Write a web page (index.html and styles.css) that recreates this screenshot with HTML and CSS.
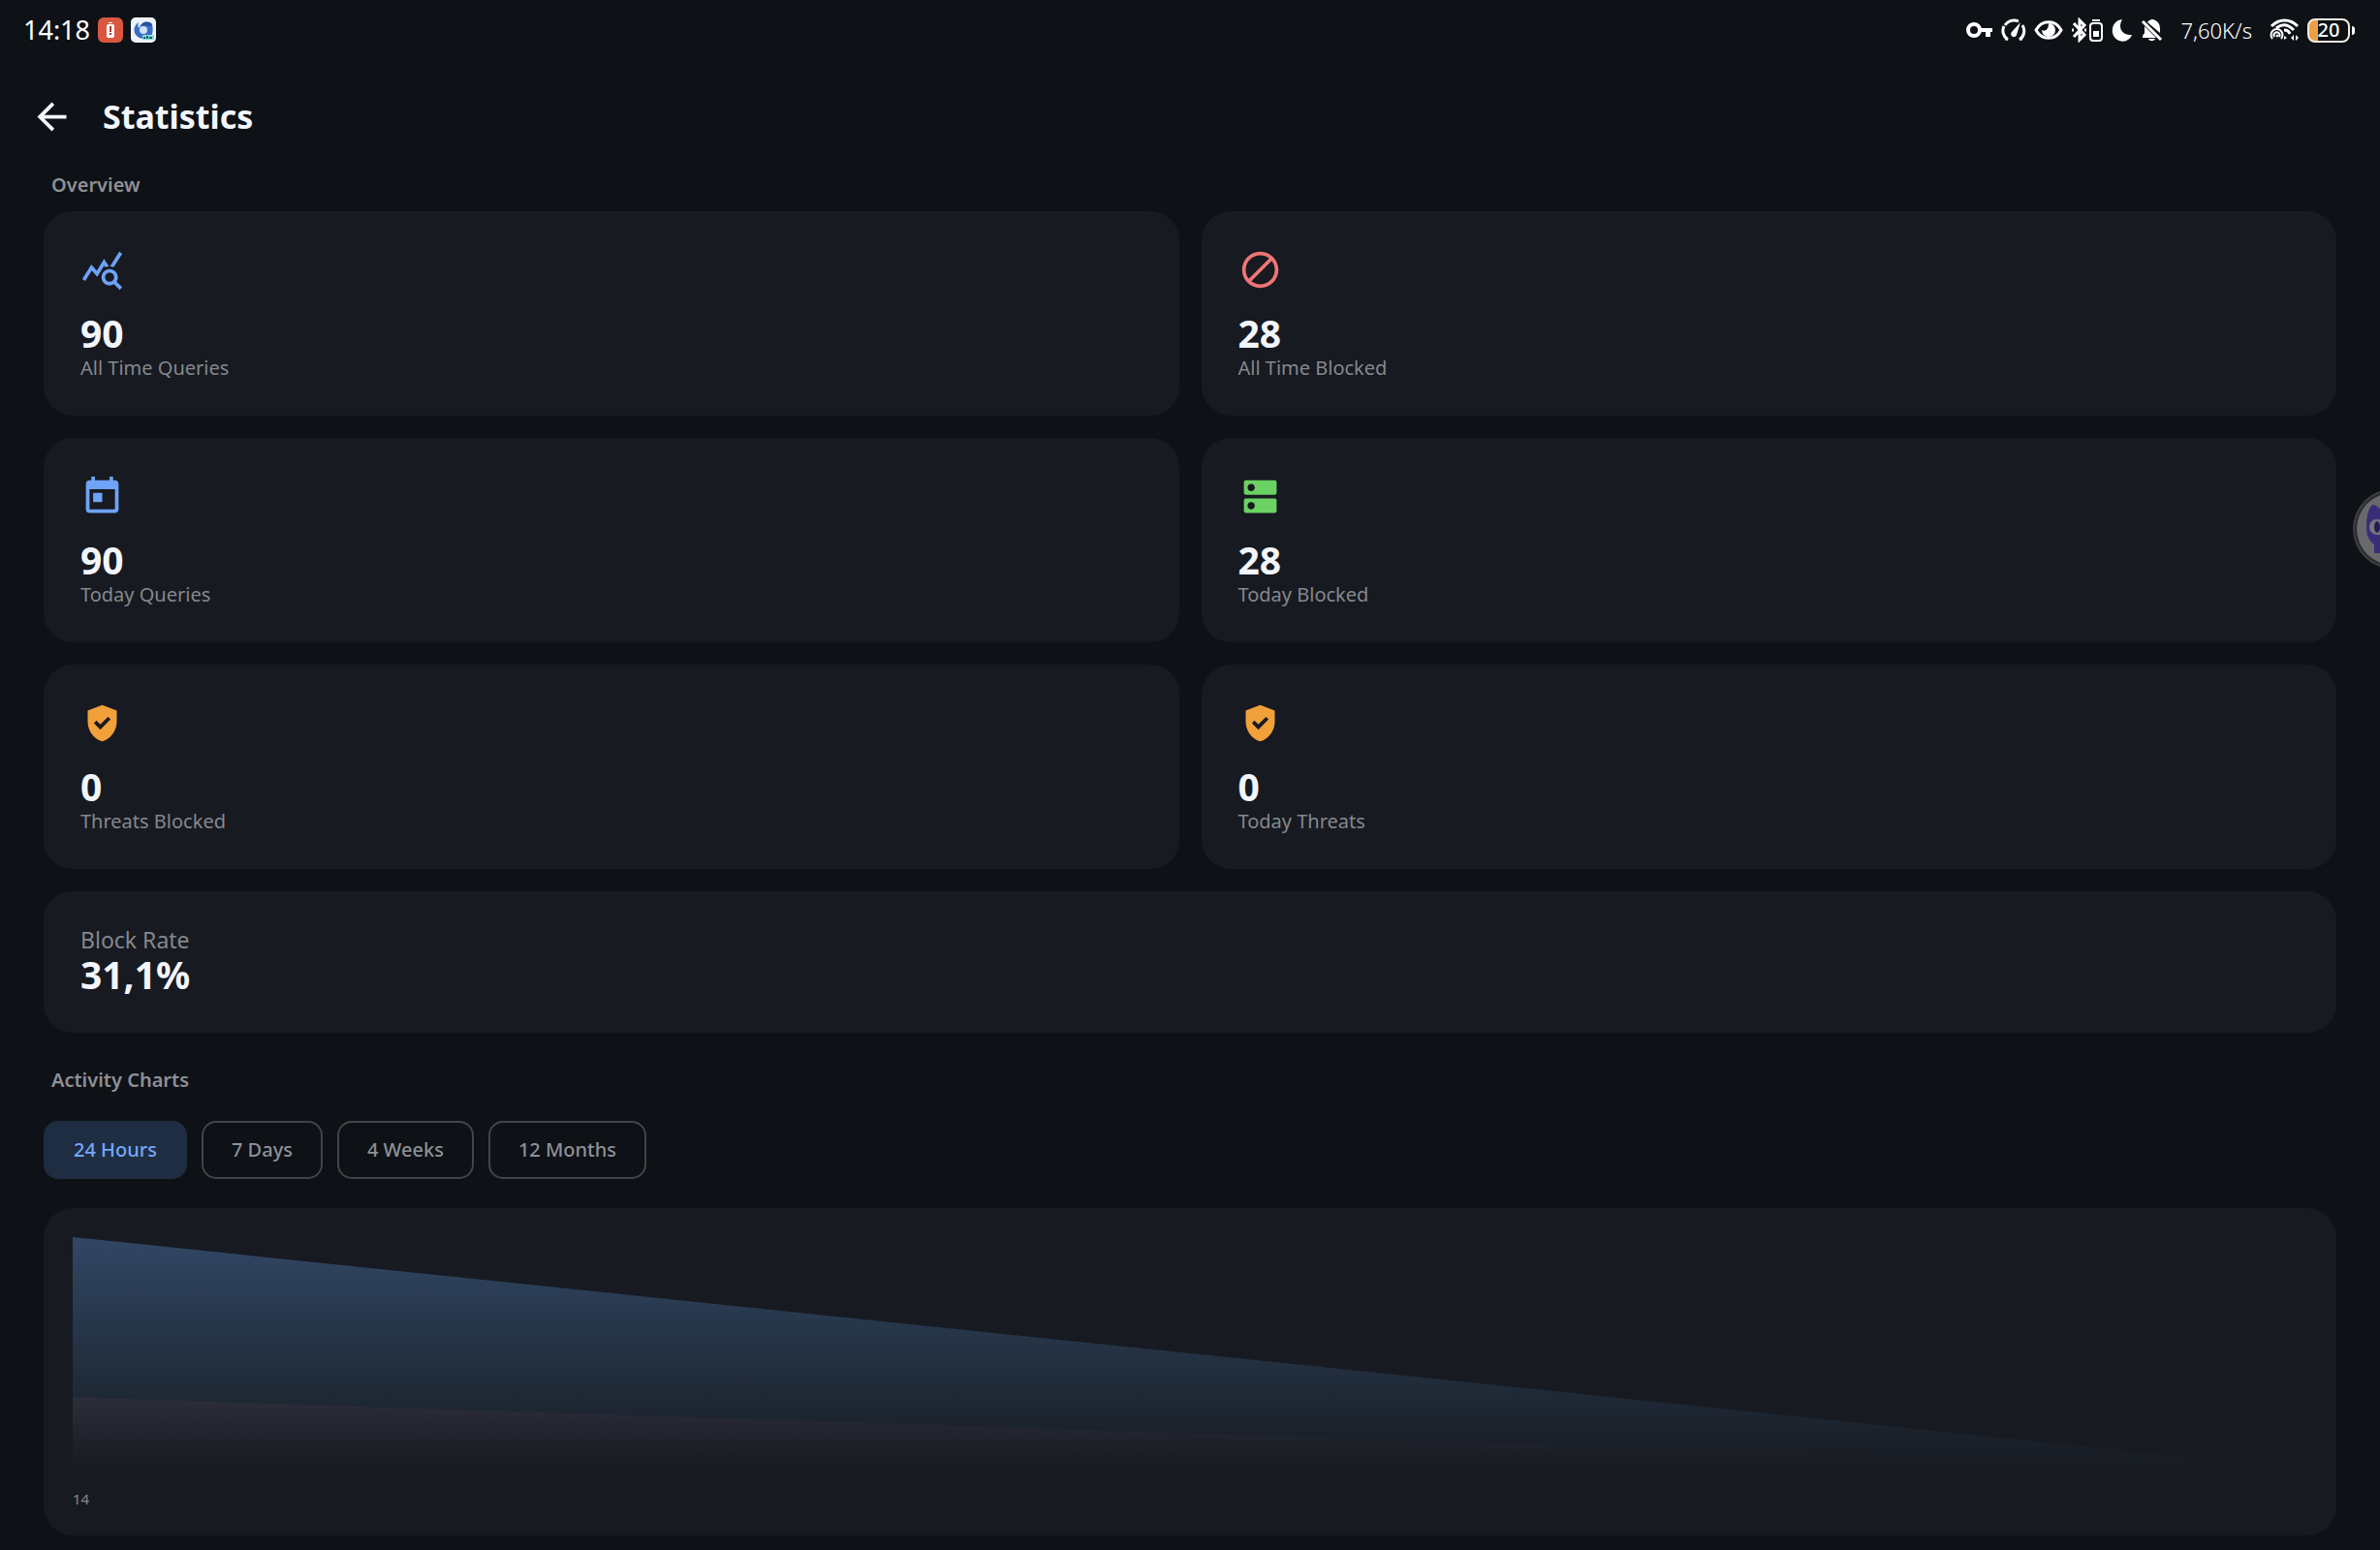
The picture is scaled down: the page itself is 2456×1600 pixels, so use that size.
FILE: index.html
```html
<!DOCTYPE html>
<html lang="en">
<head>
    <meta charset="UTF-8">
    <title>Statistics</title>
    <link rel="stylesheet" href="styles.css">
</head>
<body>
    <!-- Status bar -->
    <div class="status-bar">
        <div class="status-left">
            <span class="clock">14:18</span>
            <svg class="app-icon" viewBox="0 0 26 26">
                <rect width="26" height="26" rx="6" fill="#d9573f"/>
                <rect x="11" y="5" width="4" height="1" fill="#fff"/>
                <rect x="9" y="7" width="8" height="14" rx="2" fill="#fff"/>
                <path d="M12 9h2v6h-2zM12 16h2v2h-2z" fill="#a83a2c"/>
            </svg>
            <svg class="app-icon" viewBox="0 0 26 26">
                <rect width="26" height="26" rx="5" fill="#eef3fa"/>
                <path d="M8 5C3 8 2 15 6 19c4 4 11 4 15 0 2-3 2-8 1-12-2-3-7-3-10-1C10 7 9 9 9 11 7 10 7 7 8 5z" fill="#3a6cc4"/>
                <path d="M12 6c3-2 8-2 10 2l-3 1c-2-1-5-1-7 0z" fill="#274f9e"/>
                <circle cx="13" cy="13" r="4" fill="#cfe0f8"/>
                <rect x="12" y="18" width="12" height="5" rx="1" fill="#7fe0dc"/>
                <path d="M13 20h2v2h-2zM16 19h2v3h-2zM19 20h3v2h-3z" fill="#24566e"/>
            </svg>
        </div>
        <div class="status-right">
            <svg width="28" height="26" viewBox="0 0 28 26">
                <circle cx="8" cy="13" r="6" fill="none" stroke="#fff" stroke-width="4"/>
                <path d="M13 11h14v4h-2v5h-5v-5h-7z" fill="#fff"/>
            </svg>
            <svg width="26" height="26" viewBox="0 0 26 26" fill="none" stroke="#fff" stroke-width="3">
                <path d="M7 23A11 11 0 0 1 3 9M4 8A11 11 0 0 1 18 4M22 8a11 11 0 0 1-3 15M4 22h3M19 22h3"/>
                <path d="M20 5l-4 13a3 3 0 1 1-5-3z" fill="#fff" stroke="none"/>
            </svg>
            <svg width="30" height="26" viewBox="0 0 30 26">
                <path d="M2 13C8 2 22 2 28 13 22 24 8 24 2 13z" fill="none" stroke="#fff" stroke-width="3"/>
                <path d="M15 6a7 7 0 1 1-7 7c3 2 7 0 7-7z" fill="#fff"/>
            </svg>
            <svg width="33" height="26" viewBox="0 0 33 26" fill="none" stroke="#fff" stroke-width="2">
                <path d="M3 6l11 12-5 5V3l5 5L3 20" stroke-width="3"/>
                <path d="M1 13h2M14 13h2" stroke-width="3"/>
                <path d="M22 3h8"/>
                <rect x="20" y="6" width="12" height="18" rx="3"/>
                <rect x="23" y="14" width="6" height="6" fill="#fff" stroke="none"/>
            </svg>
            <svg width="23" height="26" viewBox="0 0 23 26">
                <path d="M12 2C0 3-2 20 9 24c6 2 11-1 13-6C12 19 7 11 12 2z" fill="#fff"/>
            </svg>
            <svg width="23" height="26" viewBox="0 0 23 26">
                <path d="M7 5c2-3 6-4 8-2 4 2 5 5 5 9v4zM4 9l12 12H2v-2l2-3zM8 22h7c-1 3-6 3-7 0z" fill="#fff"/>
                <path d="M2 4l19 19" stroke="#fff" stroke-width="3"/>
            </svg>
            <span class="speed">7,60K/s</span>
            <svg width="31" height="26" viewBox="0 0 31 26" fill="none" stroke="#fff">
                <path d="M2 9C10 1 21 1 29 9M7 11c6-5 12-4 18 2M15 13c3 0 5 1 6 4" stroke-width="3"/>
                <path d="M3 22a6 6 0 1 1 9 0M5 20a3 3 0 1 1 5 0" stroke-width="2"/>
                <circle cx="8" cy="19" r="1" fill="#fff"/>
                <path d="M15 19v4l3-2zM22 21l3-3v6zM30 21l-3-3v6z" fill="#fff" stroke="none"/>
            </svg>
            <span class="battery">20</span>
        </div>
    </div>

    <!-- Title bar -->
    <header class="header">
        <button class="back" aria-label="Back">
            <svg class="icon" viewBox="0 0 24 24"><path d="M20 11H7.83l5.59-5.59L12 4l-8 8 8 8 1.41-1.41L7.83 13H20v-2z"/></svg>
        </button>
        <h1>Statistics</h1>
    </header>

    <main>
        <h2>Overview</h2>
        <div class="cards">
            <div class="card">
                <svg class="icon blue" viewBox="0 0 24 24"><path d="M19.88 18.47c.44-.7.7-1.51.7-2.39 0-2.49-2.01-4.5-4.5-4.5s-4.5 2.01-4.5 4.5 2.01 4.5 4.49 4.5c.88 0 1.7-.26 2.39-.7L21.58 23 23 21.58l-3.12-3.11zm-3.8.11c-1.38 0-2.5-1.12-2.5-2.5s1.12-2.5 2.5-2.5 2.5 1.12 2.5 2.5-1.12 2.5-2.5 2.5zm-.36-8.5c-.74.02-1.45.18-2.1.45l-.55-.83-3.8 6.18-3.01-3.52-3.63 5.81L1 17l5-8 3 3.5L13 6l2.72 4.08zm2.59.5c-.64-.28-1.33-.45-2.05-.49L21.38 2 23 3.18l-4.69 7.4z"/></svg>
                <div class="value">90</div>
                <div class="label">All Time Queries</div>
            </div>
            <div class="card">
                <svg class="icon red" viewBox="0 0 24 24"><path d="M12 2C6.48 2 2 6.48 2 12s4.48 10 10 10 10-4.48 10-10S17.52 2 12 2zM4 12c0-4.42 3.58-8 8-8 1.85 0 3.55.63 4.9 1.69L5.69 16.9C4.63 15.55 4 13.85 4 12zm8 8c-1.85 0-3.55-.63-4.9-1.69L18.31 7.1C19.37 8.45 20 10.15 20 12c0 4.42-3.58 8-8 8z"/></svg>
                <div class="value">28</div>
                <div class="label">All Time Blocked</div>
            </div>
            <div class="card">
                <svg class="icon blue" viewBox="0 0 24 24"><path d="M19 3h-1V1h-2v2H8V1H6v2H5c-1.11 0-1.99.9-1.99 2L3 19c0 1.1.89 2 2 2h14c1.1 0 2-.9 2-2V5c0-1.1-.9-2-2-2zm0 16H5V8h14v11zM7 10h5v5H7z"/></svg>
                <div class="value">90</div>
                <div class="label">Today Queries</div>
            </div>
            <div class="card">
                <svg class="icon green" viewBox="0 0 24 24"><path d="M20 13H4c-.55 0-1 .45-1 1v6c0 .55.45 1 1 1h16c.55 0 1-.45 1-1v-6c0-.55-.45-1-1-1zM7 19c-1.1 0-2-.9-2-2s.9-2 2-2 2 .9 2 2-.9 2-2 2zM20 3H4c-.55 0-1 .45-1 1v6c0 .55.45 1 1 1h16c.55 0 1-.45 1-1V4c0-.55-.45-1-1-1zM7 9c-1.1 0-2-.9-2-2s.9-2 2-2 2 .9 2 2-.9 2-2 2z"/></svg>
                <div class="value">28</div>
                <div class="label">Today Blocked</div>
            </div>
            <div class="card">
                <svg class="icon orange" viewBox="0 0 24 24"><path d="M12 2 4 5v6.09c0 5.05 3.41 9.76 8 10.91 4.59-1.15 8-5.86 8-10.91V5l-8-3zm-1.06 13.54L7.4 12l1.41-1.41 2.12 2.12 4.24-4.24 1.41 1.41-5.64 5.66z"/></svg>
                <div class="value">0</div>
                <div class="label">Threats Blocked</div>
            </div>
            <div class="card">
                <svg class="icon orange" viewBox="0 0 24 24"><path d="M12 2 4 5v6.09c0 5.05 3.41 9.76 8 10.91 4.59-1.15 8-5.86 8-10.91V5l-8-3zm-1.06 13.54L7.4 12l1.41-1.41 2.12 2.12 4.24-4.24 1.41 1.41-5.64 5.66z"/></svg>
                <div class="value">0</div>
                <div class="label">Today Threats</div>
            </div>
            <div class="card rate">
                <div class="rate-label">Block Rate</div>
                <div class="value">31,1%</div>
            </div>
        </div>

        <h2 class="charts-title">Activity Charts</h2>
        <div class="ranges">
            <button class="range active">24 Hours</button>
            <button class="range">7 Days</button>
            <button class="range">4 Weeks</button>
            <button class="range">12 Months</button>
        </div>

        <!-- Queries in blue, blocked in red -->
        <div class="chart">
            <svg class="plot" viewBox="0 0 100 90" preserveAspectRatio="none">
                <defs>
                    <linearGradient id="queries" gradientUnits="userSpaceOnUse" x1="0" y1="0" x2="0" y2="90">
                        <stop offset="0" stop-color="#6aa6f7" stop-opacity="0.32"/>
                        <stop offset="1" stop-color="#5fb0e8" stop-opacity="0"/>
                    </linearGradient>
                    <linearGradient id="blocked" gradientUnits="userSpaceOnUse" x1="0" y1="0" x2="0" y2="90">
                        <stop offset="0" stop-color="#f07474" stop-opacity="0.2"/>
                        <stop offset="1" stop-color="#f07474" stop-opacity="0"/>
                    </linearGradient>
                </defs>
                <path d="M0 0L100 90H0z" fill="url(#queries)"/>
                <path d="M0 62L100 90H0z" fill="url(#blocked)"/>
            </svg>
            <div class="axis">14</div>
        </div>
    </main>

    <!-- Floating bubble, half off the screen -->
    <div class="bubble">
        <svg width="82" height="82" viewBox="0 0 82 82">
            <circle cx="41" cy="41" r="40" fill="#2b2c30" stroke="#3d3f43" stroke-width="2"/>
            <circle cx="41" cy="41" r="37" fill="#69696d"/>
            <path d="M14 38C14 28 16 20 20 16c4 0 8 4 10 7h22c2-3 6-7 10-7 4 4 6 12 6 22 0 12-8 18-16 20v8H22v-9c-6-4-8-10-8-19z" fill="#3a2d78"/>
            <ellipse cx="25" cy="39" rx="8" ry="8" fill="#77777c"/>
            <ellipse cx="25" cy="39" rx="3" ry="6" fill="#251b52"/>
        </svg>
    </div>
</body>
</html>
```
FILE: styles.css
```css
* {
    box-sizing: border-box;
    margin: 0;
    padding: 0;
}

body {
    background: #0e1116;
    color: #f2f5fc;
    font-family: "Noto Sans", sans-serif;
    font-size: 20px;
    line-height: 26px;
}

svg {
    display: block;
}

button {
    font: inherit;
    color: inherit;
    background: none;
    border: none;
}

/* Status bar */
.status-bar {
    display: flex;
    justify-content: space-between;
    align-items: center;
    height: 62px;
    padding: 0 25px 0 24px;
    color: #fff;
}

.status-left,
.status-right {
    display: flex;
    align-items: center;
    gap: 8px;
}

.clock {
    font-size: 27px;
}

.app-icon {
    width: 26px;
    height: 26px;
}

.speed {
    margin: 0 10px;
    font-size: 22px;
    font-weight: 300;
}

.battery {
    position: relative;
    width: 44px;
    height: 25px;
    border: 2px solid #f4ece2;
    border-radius: 8px;
    background: linear-gradient(to right, #eba045 9px, transparent 9px);
    font-size: 20px;
    font-weight: 500;
    line-height: 20px;
    text-align: center;
    margin-right: 6px;
}

.battery::after {
    content: "";
    position: absolute;
    top: 6px;
    right: -7px;
    width: 3px;
    height: 9px;
    border-radius: 0 3px 3px 0;
    background: #fff;
}

/* Title bar */
.header {
    display: flex;
    align-items: center;
    gap: 30px;
    height: 116px;
    padding: 0 31px;
}

.icon {
    width: 45px;
    height: 45px;
    fill: currentColor;
}

h1 {
    font-size: 34px;
    line-height: 44px;
}

main {
    padding: 0 45px 15px;
}

h2 {
    padding: 0 8px;
    margin-bottom: 14px;
    color: #8d9096;
    font-size: 20px;
    font-weight: 600;
}

/* Cards */
.cards {
    display: grid;
    grid-template-columns: 1fr 1fr;
    gap: 23px;
}

.card {
    padding: 38px 38px 36px;
    border-radius: 30px;
    background: #171a21;
}

.value {
    margin-top: 20px;
    font-size: 39px;
    font-weight: 700;
    line-height: 46px;
}

.label,
.rate-label {
    color: #85888e;
}

.rate {
    grid-column: 1 / -1;
    padding: 37px 38px;
}

.rate-label {
    font-size: 23px;
}

.rate .value {
    margin-top: 0;
}

.blue {
    color: #6ea3f7;
}

.red {
    color: #ef7575;
}

.green {
    color: #6bd163;
}

.orange {
    color: #f2a03a;
}

/* Range buttons */
.charts-title {
    margin: 36px 0 29px;
}

.ranges {
    display: flex;
    gap: 15px;
    margin-bottom: 30px;
}

.range {
    height: 60px;
    padding: 0 29px;
    border: 2px solid #424449;
    border-radius: 15px;
    color: #8d9096;
    font-weight: 500;
}

.range.active {
    border-color: #1f2d43;
    background: #1f2d43;
    color: #74a8fa;
}

/* Chart */
.chart {
    padding: 30px 30px 28px;
    border-radius: 30px;
    background: #171a21;
}

.plot {
    width: 100%;
    height: 240px;
}

.axis {
    margin-top: 20px;
    color: #85888e;
    font-size: 15px;
    line-height: 20px;
}

/* Bubble */
.bubble {
    position: fixed;
    top: 505px;
    right: 0;
    width: 28px;
    height: 82px;
    overflow: hidden;
}
```
